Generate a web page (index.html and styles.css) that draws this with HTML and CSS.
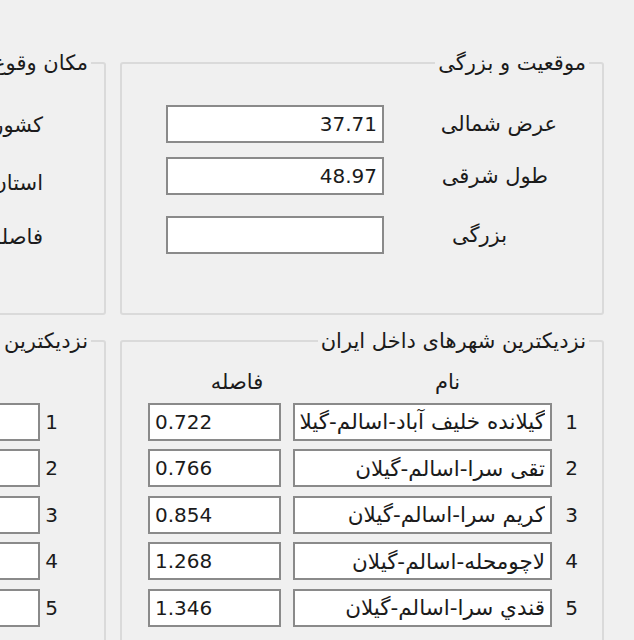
FILE: index.html
```html
<!DOCTYPE html>
<html lang="fa" dir="rtl">
<head>
    <meta charset="UTF-8">
    <meta name="viewport" content="width=device-width, initial-scale=1.0">
    <title>زلزله</title>
    <link rel="stylesheet" href="styles.css">
</head>
<body>
    <div class="form">
        <div class="row">
            <fieldset class="group group-top">
                <legend>موقعیت و بزرگی</legend>
                <div class="field field-lat">
                    <label>عرض شمالی</label>
                    <input type="text" class="value" value="37.71">
                </div>
                <div class="field field-lon">
                    <label>طول شرقی</label>
                    <input type="text" class="value" value="48.97">
                </div>
                <div class="field field-mag">
                    <label>بزرگی</label>
                    <input type="text" class="value" value="">
                </div>
            </fieldset>

            <fieldset class="group group-side group-top">
                <legend>مکان وقوع</legend>
                <div class="field field-country">
                    <label>کشور</label>
                    <input type="text" value="">
                </div>
                <div class="field field-province">
                    <label>استان</label>
                    <input type="text" value="">
                </div>
                <div class="field field-distance">
                    <label>فاصله</label>
                    <input type="text" value="">
                </div>
            </fieldset>
        </div>

        <div class="row">
            <fieldset class="group group-bottom">
                <legend>نزدیکترین شهرهای داخل ایران</legend>
                <div class="cities">
                    <span></span>
                    <span class="head head-name">نام</span>
                    <span class="head head-dist">فاصله</span>

                    <span class="num">1</span>
                    <input type="text" class="name" value="گیلانده خلیف آباد-اسالم-گیلان">
                    <input type="text" class="dist" dir="ltr" value="0.722">

                    <span class="num">2</span>
                    <input type="text" class="name" value="تقی سرا-اسالم-گیلان">
                    <input type="text" class="dist" dir="ltr" value="0.766">

                    <span class="num">3</span>
                    <input type="text" class="name" value="کریم سرا-اسالم-گیلان">
                    <input type="text" class="dist" dir="ltr" value="0.854">

                    <span class="num">4</span>
                    <input type="text" class="name" value="لاچومحله-اسالم-گیلان">
                    <input type="text" class="dist" dir="ltr" value="1.268">

                    <span class="num">5</span>
                    <input type="text" class="name" value="قندي سرا-اسالم-گیلان">
                    <input type="text" class="dist" dir="ltr" value="1.346">
                </div>
            </fieldset>

            <fieldset class="group group-side group-bottom">
                <legend>نزدیکترین شهرهای خارج از ایران</legend>
                <div class="cities cities-side">
                    <span></span>
                    <span class="head head-name">نام</span>
                    <span class="head head-dist">فاصله</span>

                    <span class="num">1</span>
                    <input type="text" class="name" value="">
                    <input type="text" class="dist" dir="ltr" value="">

                    <span class="num">2</span>
                    <input type="text" class="name" value="">
                    <input type="text" class="dist" dir="ltr" value="">

                    <span class="num">3</span>
                    <input type="text" class="name" value="">
                    <input type="text" class="dist" dir="ltr" value="">

                    <span class="num">4</span>
                    <input type="text" class="name" value="">
                    <input type="text" class="dist" dir="ltr" value="">

                    <span class="num">5</span>
                    <input type="text" class="name" value="">
                    <input type="text" class="dist" dir="ltr" value="">
                </div>
            </fieldset>
        </div>
    </div>
</body>
</html>
```

FILE: styles.css
```css
* {
    box-sizing: border-box;
}

body {
    margin: 0;
    height: 640px;
    overflow: hidden;
    background-color: #f0f0f0;
    color: #1b1b1b;
    font-family: "DejaVu Sans", sans-serif;
    font-size: 21px;
}

.form {
    display: flex;
    flex-direction: column;
    gap: 14px;
    padding: 51px 30px 0 0;
}

.row {
    display: flex;
    gap: 14px;
}

/* group boxes */
.group {
    flex-shrink: 0;
    width: 484px;
    margin: 0;
    padding: 0;
    border: 2px solid #dadada;
    border-radius: 3px;
}

.group legend {
    margin-right: 13px;
    padding: 0 3px;
    line-height: 24px;
}

.group-side {
    width: 440px;
}

.group-top {
    height: 264px;
}

.group-bottom {
    height: 330px;
}

input {
    height: 38px;
    margin: 0;
    padding: 0 5px;
    border: 2px solid #8a8a8a;
    background-color: #fff;
    color: #1b1b1b;
    font-family: "DejaVu Sans", sans-serif;
    font-size: 21.5px;
}

input.value,
input.dist {
    font-size: 20px;
}

/* label + textbox rows */
.field {
    display: grid;
    grid-template-columns: 218px 218px;
    align-items: center;
}

.field input {
    width: 218px;
}

.field-lat { margin-top: 30px; }
.field-lat label { padding-right: 45px; }

.field-lon { margin-top: 14px; }
.field-lon label { padding-right: 54px; }

.field-mag { margin-top: 21px; }
.field-mag label { padding-right: 95px; }

.group-side .field label { padding-right: 61px; }
.field-country { margin-top: 31px; }
.field-province { margin-top: 20px; }
.field-distance { margin-top: 16px; }

/* nearest cities table */
.cities {
    display: grid;
    grid-template-columns: 38px 259px 133px;
    column-gap: 12px;
    row-gap: 8.5px;
    align-items: center;
    margin-top: 17px;
}

.cities input {
    width: 100%;
}

.cities-side {
    grid-template-columns: 52px 259px 133px;
}

.head {
    line-height: 24px;
    text-align: center;
}

.head-name { padding-left: 50px; }
.head-dist { padding-left: 45px; }

.num {
    padding-right: 24px;
    font-size: 20px;
}

.cities-side .num {
    padding-right: 46px;
}
```
